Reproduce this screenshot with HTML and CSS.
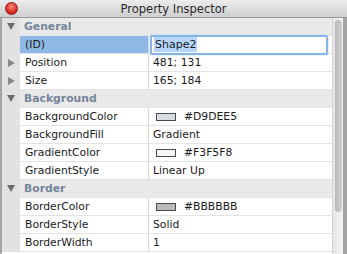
FILE: index.html
```html
<!DOCTYPE html>
<html>
<head>
    <meta charset="UTF-8">
    <title>Property Inspector</title>
    <link rel="stylesheet" href="styles.css">
</head>
<body>
    <div class="window">
        <div class="titlebar">
            <span class="close"></span>
            <span class="title">Property Inspector</span>
        </div>
        <div class="panel">
            <div class="grid">
                <div class="row section"><span class="twisty open"></span><span class="label">General</span></div>
                <div class="row selected">
                    <span class="twisty"></span>
                    <span class="name">(ID)</span>
                    <span class="value"><span class="edit"><span class="sel">Shape2</span></span></span>
                </div>
                <div class="row"><span class="twisty closed"></span><span class="name">Position</span><span class="value">481; 131</span></div>
                <div class="row"><span class="twisty closed"></span><span class="name">Size</span><span class="value">165; 184</span></div>

                <div class="row section"><span class="twisty open"></span><span class="label">Background</span></div>
                <div class="row"><span class="twisty"></span><span class="name">BackgroundColor</span><span class="value"><span class="swatch swatch-bg"></span>#D9DEE5</span></div>
                <div class="row"><span class="twisty"></span><span class="name">BackgroundFill</span><span class="value">Gradient</span></div>
                <div class="row"><span class="twisty"></span><span class="name">GradientColor</span><span class="value"><span class="swatch swatch-grad"></span>#F3F5F8</span></div>
                <div class="row"><span class="twisty"></span><span class="name">GradientStyle</span><span class="value">Linear Up</span></div>

                <div class="row section"><span class="twisty open"></span><span class="label">Border</span></div>
                <div class="row"><span class="twisty"></span><span class="name">BorderColor</span><span class="value"><span class="swatch swatch-border"></span>#BBBBBB</span></div>
                <div class="row"><span class="twisty"></span><span class="name">BorderStyle</span><span class="value">Solid</span></div>
                <div class="row"><span class="twisty"></span><span class="name">BorderWidth</span><span class="value">1</span></div>
            </div>
            <div class="scrollbar"><div class="thumb"></div></div>
        </div>
    </div>
</body>
</html>
```

FILE: styles.css
```css
* {
    margin: 0;
    padding: 0;
    box-sizing: border-box;
}

body {
    background-color: #ffffff;
    font-family: "DejaVu Sans", sans-serif;
    font-size: 10.8px;
    color: #1a1a1a;
    width: 347px;
    height: 254px;
    overflow: hidden;
}

.window {
    width: 347px;
    height: 254px;
    display: flex;
    flex-direction: column;
}

.titlebar {
    height: 18px;
    display: flex;
    align-items: center;
    justify-content: center;
    position: relative;
    background: linear-gradient(#ececec, #cfcfcf);
    border-bottom: 1px solid #9a9a9a;
}

.close {
    position: absolute;
    left: 5px;
    top: 2px;
    width: 13px;
    height: 13px;
    border-radius: 50%;
    background: radial-gradient(circle at 50% 35%, #ff8f85 0%, #e3322a 55%, #a8120c 100%);
    border: 1px solid #8a1c16;
}

.title {
    font-size: 11.5px;
    color: #2a2a2a;
}

.panel {
    flex: 1;
    display: flex;
    background-color: #ececec;
    border-left: 2px solid #a4a4a4;
    border-right: 4px solid #a4a4a4;
}

.grid {
    width: 331px;
    display: flex;
    flex-direction: column;
    background-color: #ffffff;
    border-right: 1px solid #d4d4d4;
}

.row {
    height: 18px;
    display: flex;
    align-items: center;
    border-bottom: 1px solid #e3e3e3;
}

.twisty {
    width: 18px;
    height: 100%;
    background-color: #e2e2e2;
    display: flex;
    align-items: center;
    justify-content: center;
    position: relative;
}

.twisty.open::before {
    content: "";
    border-left: 4px solid transparent;
    border-right: 4px solid transparent;
    border-top: 7px solid #6c6c6c;
}

.twisty.closed::before {
    content: "";
    border-top: 4px solid transparent;
    border-bottom: 4px solid transparent;
    border-left: 7px solid #888888;
}

.name {
    width: 129px;
    height: 100%;
    display: flex;
    align-items: center;
    padding-left: 5px;
    border-right: 1px solid #d6d6d6;
}

.value {
    flex: 1;
    height: 100%;
    display: flex;
    align-items: center;
    padding-left: 4px;
}

.section {
    background-color: #e9e9e9;
}

.section .label {
    padding-left: 4px;
    font-weight: bold;
    color: #76859a;
}

.selected .name {
    background-color: #8fb8e6;
}

.edit {
    display: flex;
    align-items: center;
    width: 178px;
    height: 20px;
    margin-left: -3px;
    padding-left: 2px;
    background: #ffffff;
    border: 2px solid #86b5e6;
    border-radius: 2px;
    box-shadow: 0 0 2px #a6caef;
}

.sel {
    background-color: #b5d5ff;
    padding: 1px 1px;
    font-size: 11px;
}

.swatch {
    width: 20px;
    height: 8px;
    margin: 0 8px 0 3px;
    border: 1px solid #4a4a4a;
}

.swatch-bg {
    background-color: #d9dee5;
}

.swatch-grad {
    background-color: #f3f5f8;
}

.swatch-border {
    background-color: #bbbbbb;
}

.scrollbar {
    flex: 1;
    display: flex;
    justify-content: center;
    padding-top: 2px;
    background: linear-gradient(to right, #e6e6e6, #f4f4f4);
}

.thumb {
    width: 7px;
    height: 192px;
    border-radius: 4px;
    background: linear-gradient(to right, #b9b9b9, #cfcfcf);
}
```
